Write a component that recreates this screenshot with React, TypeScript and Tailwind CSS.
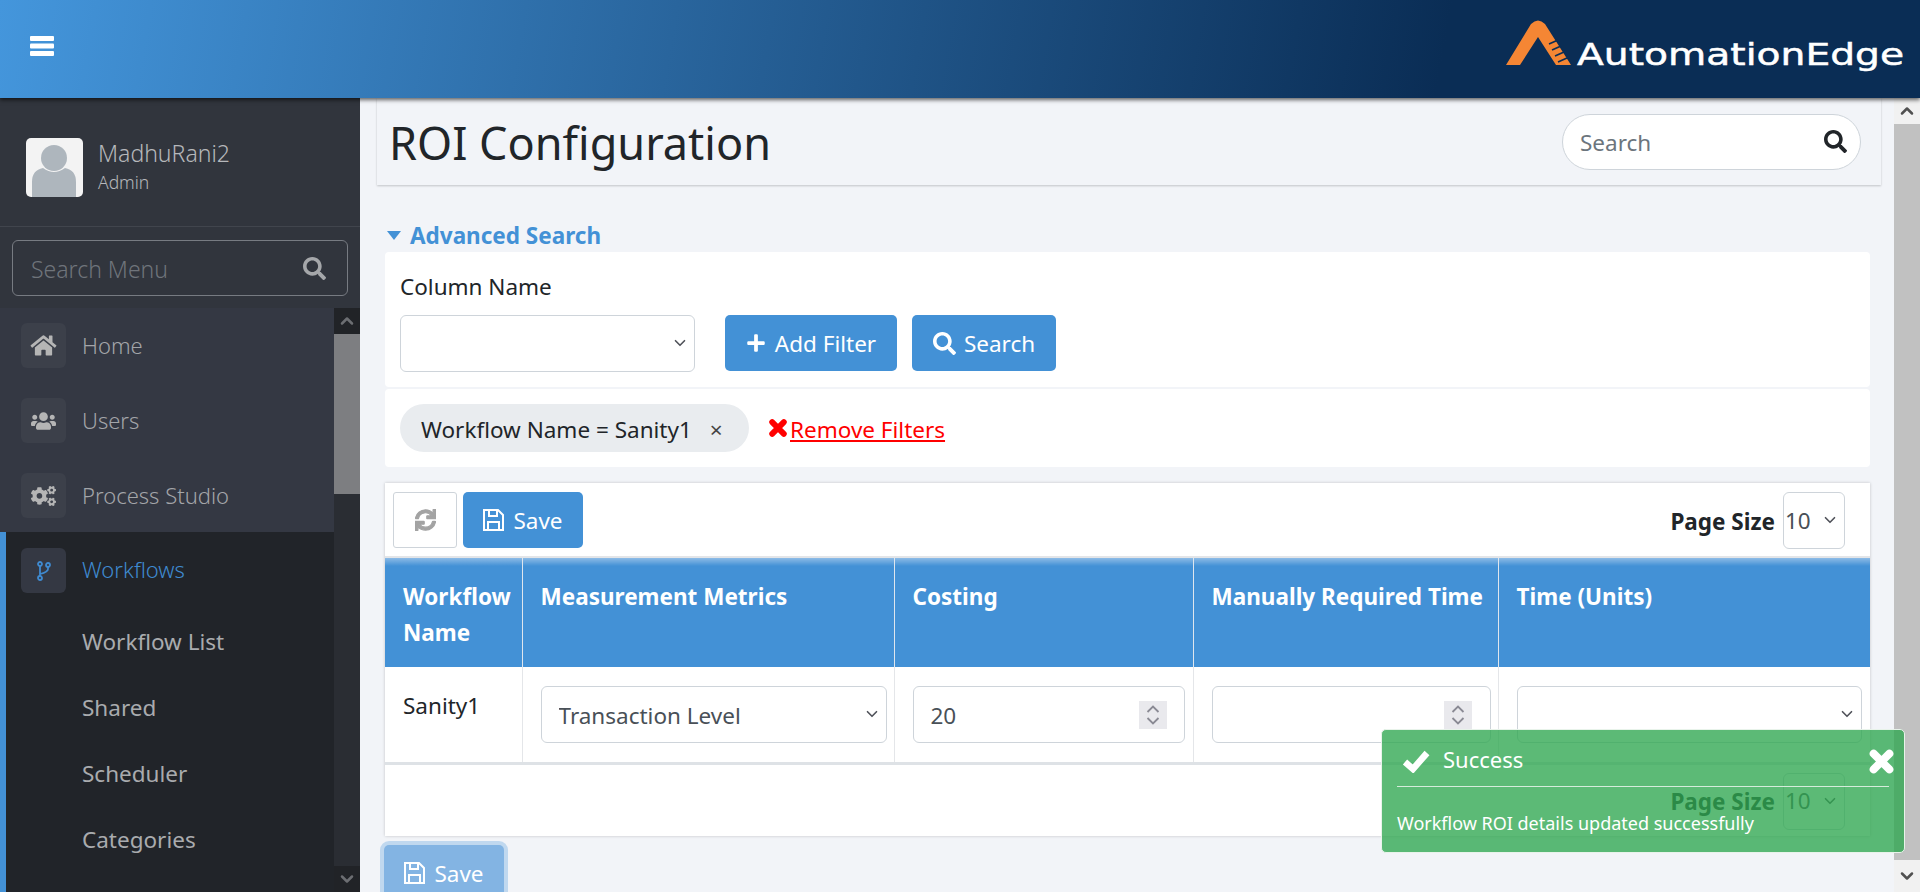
import React from "react";
import { FaHome, FaUsers, FaCogs, FaSearch, FaPlus, FaSync } from "react-icons/fa";
import { ChevronUp, ChevronDown } from "lucide-react";

const navItems = [
  { label: "Home", icon: <FaHome className="w-[27px] h-[23px]" /> },
  { label: "Users", icon: <FaUsers className="w-[25px] h-[22px]" /> },
  { label: "Process Studio", icon: <FaCogs className="w-[25px] h-[22px]" /> },
];

const subItems = ["Workflow List", "Shared", "Scheduler", "Categories"];

const Logo = () => (
  <div className="flex items-start mr-[15px] mt-[20px]">
    <svg width="65" height="45" viewBox="0 0 65 45" className="shrink-0">
      <path d="M0 45 L25 4 Q32 -3 39 4 L65 45 L50 45 L32 17 L14 45 Z" fill="#f58634" />
      <path d="M43 24 L52 20 M46 30 L55 26 M49 36 L58 32 M52 42 L61 38" stroke="#0a2d55" strokeWidth="1.6" />
    </svg>
    <span className="ml-[6px] mt-[17px] w-[328px] whitespace-nowrap origin-left scale-x-[1.265] text-[31px] leading-[34px] text-white font-['DejaVu_Sans'] [-webkit-text-stroke:0.5px_white]">AutomationEdge</span>
  </div>
);

const Avatar = () => (
  <div className="w-[57px] h-[59px] rounded-[5px] bg-[#f3f3f3] overflow-hidden shrink-0">
    <svg width="57" height="59" viewBox="0 0 57 59">
      <circle cx="28" cy="20" r="13" fill="#aeb6bd" />
      <path d="M6 59 V44 Q6 32 17 30 Q28 38 39 30 Q50 32 50 44 V59 Z" fill="#aeb6bd" />
    </svg>
  </div>
);

const SaveIcon = () => (
  <svg width="21" height="22" viewBox="0 0 21 22" fill="none" stroke="currentColor" strokeWidth="2">
    <path d="M1 1 H15 L20 6 V21 H1 Z" />
    <path d="M6 1 V7 H14 V1 M5 21 V13 H16 V21" />
  </svg>
);

const CrossIcon = ({ className }: { className: string }) => (
  <svg viewBox="0 0 24 24" className={className} fill="none" stroke="currentColor" strokeWidth="7" strokeLinecap="round">
    <path d="M5 5 L19 19 M19 5 L5 19" />
  </svg>
);

const ForkIcon = () => (
  <svg width="14" height="20" viewBox="0 0 14 20" fill="none" stroke="currentColor" strokeWidth="1.8">
    <circle cx="3" cy="3" r="2" />
    <circle cx="3" cy="17" r="2" />
    <circle cx="11" cy="4" r="2" />
    <path d="M3 5 V15 M11 6 V8 Q11 11 3 13" />
  </svg>
);

const Spinner = () => (
  <svg width="28" height="28" viewBox="0 0 28 28" fill="none" stroke="#8a8a94" strokeWidth="1.8" className="bg-[#e9e9ed] shrink-0">
    <path d="M8.5 11 L14 5.5 L19.5 11 M8.5 17 L14 22.5 L19.5 17" />
  </svg>
);

const Select = ({ value, className, selectClass }: { value?: string; className: string; selectClass?: string }) => (
  <div className={`relative h-[57px] ${className}`}>
    <select defaultValue={value} className={`appearance-none w-full h-full border border-[#ced4da] rounded-[6px] bg-white text-[#495057] ${selectClass ?? ""}`}>
      {value && <option>{value}</option>}
    </select>
    <ChevronDown className="absolute right-[6px] top-[19px] w-[18px] h-[18px] text-[#50525a] pointer-events-none" strokeWidth={2.2} />
  </div>
);

const PageSize = () => (
  <div className="flex items-center">
    <span className="font-bold text-[#212529] mr-[8px] pt-[2px]">Page Size</span>
    <Select value="10" className="w-[62px]" selectClass="pl-[1px]" />
  </div>
);

const App = () => {
  return (
    <div className="w-[1920px] h-[892px] overflow-hidden flex flex-col relative bg-[#f2f4f8] text-[22.5px] text-[#212529] font-['Noto_Sans',sans-serif]">
      {/* top bar */}
      <header className="h-[98px] shrink-0 flex justify-between relative z-10 shadow-[0_2px_4px_rgba(0,0,0,0.6)] bg-[linear-gradient(100deg,#4496dc_0%,#0a2d55_75%)]">
        <svg width="24" height="20" viewBox="0 0 24 20" fill="white" className="ml-[30px] mt-[36px]">
          <rect width="24" height="5" rx="1" />
          <rect y="7.5" width="24" height="5" rx="1" />
          <rect y="15" width="24" height="5" rx="1" />
        </svg>
        <Logo />
      </header>

      <div className="flex flex-1 min-h-0">
        {/* sidebar */}
        <aside className="w-[360px] shrink-0 bg-[#31353d] flex flex-col">
          <div className="h-[129px] shrink-0 flex items-start pl-[26px] pt-[40px] border-b border-[#41454d]">
            <Avatar />
            <div className="ml-[15px] -mt-[1px] text-[#b6b8bb]">
              <div className="text-[23px] leading-[32px] font-light">MadhuRani2</div>
              <div className="text-[17.5px] leading-[26px] font-light">Admin</div>
            </div>
          </div>
          <div className="mx-[12px] mt-[13px] h-[56px] shrink-0 border border-[#777b82] rounded-[6px] flex items-center pl-[18px] pr-[21px]">
            <input placeholder="Search Menu" className="flex-1 min-w-0 bg-transparent outline-none font-light text-[23px] pt-[3px] placeholder:text-[#6f747b]" />
            <FaSearch className="w-[23px] h-[23px] text-[#a5a7aa]" />
          </div>
          <div className="flex flex-1 min-h-0 mt-[12px] overflow-hidden">
            <nav className="flex-1 flex flex-col min-w-0">
              <div className="pt-[15px] bg-[#343843] flex flex-col h-[224px] shrink-0">
                {navItems.map((item) => (
                  <a key={item.label} className="h-[75px] shrink-0 flex items-start pl-[21px]">
                    <span className="w-[45px] h-[45px] rounded-[6px] bg-[#3c404a] flex items-center justify-center text-[#b5b5b5]">{item.icon}</span>
                    <span className="ml-[16px] mt-[7px] text-[22px] text-[#a3a5a9] font-light leading-[30px]">{item.label}</span>
                  </a>
                ))}
              </div>
              <div className="flex-1 bg-[#212429] border-l-[6px] border-[#4391d6] pt-[16px]">
                <a className="h-[45px] flex items-start pl-[15px]">
                  <span className="w-[45px] h-[45px] rounded-[6px] bg-[#343843] flex items-center justify-center text-[#3f8ad0]">
                    <ForkIcon />
                  </span>
                  <span className="ml-[16px] mt-[6px] text-[22px] text-[#3f8ad0] font-light leading-[30px]">Workflows</span>
                </a>
                <ul className="mt-[16px] pl-[76px]">
                  {subItems.map((s) => (
                    <li key={s} className="h-[66px] flex items-center text-[#a9abae]">{s}</li>
                  ))}
                </ul>
              </div>
            </nav>
            <div className="w-[26px] shrink-0 bg-[#2a2d33] flex flex-col">
              <div className="h-[26px] bg-[#212327] flex items-center justify-center text-[#6c6e72]"><ChevronUp className="w-[20px] h-[20px]" strokeWidth={3} /></div>
              <div className="h-[160px] bg-[#7d7e81]" />
              <div className="flex-1" />
              <div className="h-[26px] bg-[#212327] flex items-center justify-center text-[#6c6e72]"><ChevronDown className="w-[20px] h-[20px]" strokeWidth={3} /></div>
            </div>
          </div>
        </aside>

        {/* main */}
        <main className="flex-1 min-w-0 flex flex-col pl-[25px] pr-[24px] overflow-hidden">
          <div className="-ml-[8px] -mr-[11px] h-[87px] shrink-0 flex items-center justify-between pl-[12px] pr-[20px] shadow-[0_1px_2px_rgba(0,0,0,0.2)]">
            <h1 className="text-[45px] leading-[60px] mt-[3px]">ROI Configuration</h1>
            <div className="w-[299px] h-[56px] rounded-full border border-[#ced4da] bg-white flex items-center pl-[17px] pr-[13px]">
              <input placeholder="Search" className="flex-1 min-w-0 outline-none pt-[2px] placeholder:text-[#6c757d]" />
              <FaSearch className="w-[23px] h-[23px] text-[#212529]" />
            </div>
          </div>

          <div className="mt-[34px] h-[33px] shrink-0 flex items-center pl-[2px] text-[#4391d6] font-bold">
            <svg width="14" height="9" viewBox="0 0 14 9" className="mr-[9px]"><path d="M0 0 H14 L7 9 Z" fill="currentColor" /></svg>
            <span>Advanced Search</span>
          </div>

          <section className="h-[135px] shrink-0 bg-white rounded-[4px] pl-[15px] pt-[20px]">
            <div className="leading-[30px]">Column Name</div>
            <div className="flex mt-[13px] items-start">
              <Select className="w-[295px]" />
              <button className="ml-[30px] w-[172px] h-[56px] rounded-[5px] bg-[#4391d6] text-white flex items-center justify-center gap-[9px]">
                <FaPlus className="w-[20px] h-[20px]" /><span className="pt-[2px]">Add Filter</span>
              </button>
              <button className="ml-[15px] w-[144px] h-[56px] rounded-[5px] bg-[#4391d6] text-white flex items-center justify-center gap-[8px]">
                <FaSearch className="w-[23px] h-[23px]" /><span className="pt-[2px]">Search</span>
              </button>
            </div>
          </section>

          <section className="h-[78px] mt-[2px] shrink-0 bg-white rounded-[4px] pl-[15px] flex items-center">
            <div className="w-[349px] h-[48px] rounded-full bg-[#e9ecef] flex items-center pl-[21px]">
              <span className="pt-[3px]">Workflow Name = Sanity1</span>
              <span className="ml-[18px] pt-[3px] text-[#444]">×</span>
            </div>
            <CrossIcon className="ml-[19px] w-[20px] h-[20px] text-[#ff0000]" />
            <a className="ml-[2px] pt-[3px] text-[#ff0000] underline">Remove Filters</a>
          </section>

          <section className="mt-[16px] h-[353px] shrink-0 bg-white flex flex-col shadow-[0_0_3px_rgba(0,0,0,0.2)]">
            <div className="h-[75px] shrink-0 flex items-start justify-between pl-[8px] pr-[25px] pt-[9px] border-b-2 border-[#e3e5e8]">
              <div className="flex gap-[6px]">
                <button className="w-[64px] h-[56px] border border-[#ced4da] rounded-[3px] flex items-center justify-center text-[#a3a3a3]">
                  <FaSync className="w-[21px] h-[22px] stroke-[30]" />
                </button>
                <button className="w-[120px] h-[56px] rounded-[5px] bg-[#4391d6] text-white flex items-center justify-center gap-[9px]">
                  <SaveIcon /><span className="pt-[2px]">Save</span>
                </button>
              </div>
              <PageSize />
            </div>

            <table className="w-full table-fixed border-collapse">
              <colgroup>
                <col className="w-[137px]" />
                <col className="w-[372px]" />
                <col className="w-[299px]" />
                <col className="w-[305px]" />
                <col className="w-[372px]" />
              </colgroup>
              <thead>
                <tr className="h-[109px] text-white font-bold leading-[36px] text-left align-top">
                  {["Workflow Name", "Measurement Metrics", "Costing", "Manually Required Time", "Time (Units)"].map((h) => (
                    <th key={h} className="pl-[18px] pr-0 pt-[21px] font-bold whitespace-normal bg-[linear-gradient(#8dbbe6,#4391d6_8px)] border-x border-[#dfe6ee] first:border-l-0 last:border-r-0">{h}</th>
                  ))}
                </tr>
              </thead>
              <tbody>
                <tr className="h-[96px] align-top border-b-[3px] border-[#dee2e6]">
                  <td className="pl-[18px] pt-[24px] leading-[30px] border-r border-[#e4e6e9]">Sanity1</td>
                  <td className="pl-[18px] pr-[7px] pt-[19px] border-r border-[#e4e6e9]">
                    <Select value="Transaction Level" className="w-full" selectClass="pl-[17px] pt-[2px]" />
                  </td>
                  <td className="pl-[18px] pr-[8px] pt-[19px] border-r border-[#e4e6e9]">
                    <div className="h-[57px] border border-[#ced4da] rounded-[6px] flex items-center pl-[17px] pr-[17px]">
                      <input defaultValue="20" className="flex-1 min-w-0 outline-none pt-[2px] text-[#495057]" />
                      <Spinner />
                    </div>
                  </td>
                  <td className="pl-[18px] pr-[7px] pt-[19px] border-r border-[#e4e6e9]">
                    <div className="h-[57px] border border-[#ced4da] rounded-[6px] flex items-center justify-end pr-[18px]">
                      <Spinner />
                    </div>
                  </td>
                  <td className="pl-[18px] pr-[8px] pt-[19px]">
                    <Select className="w-full" />
                  </td>
                </tr>
              </tbody>
            </table>
            <div className="flex-1 flex justify-end items-start pt-[8px] pr-[25px]">
              <PageSize />
            </div>
          </section>

          <button className="mt-[9px] -ml-px w-[120px] h-[56px] shrink-0 rounded-[5px] bg-[#83b4e3] text-white flex items-center justify-center gap-[9px] ring-4 ring-[#c0d8ef]">
            <SaveIcon /><span className="pt-[2px]">Save</span>
          </button>
        </main>

        {/* page scrollbar */}
        <div className="w-[26px] shrink-0 bg-[#f1f1f1] flex flex-col">
          <div className="h-[26px] flex items-center justify-center text-[#505050]"><ChevronUp className="w-[20px] h-[20px]" strokeWidth={3} /></div>
          <div className="flex-1 bg-[#c1c1c1]" />
          <div className="h-[32px] flex items-center justify-center text-[#505050]"><ChevronDown className="w-[20px] h-[20px]" strokeWidth={3} /></div>
        </div>
      </div>

      {/* toast */}
      <div className="absolute z-20 left-[1381px] top-[729px] w-[524px] h-[124px] rounded-[5px] border border-[#e8f3ea] bg-[#2ea74f]/[0.78] text-white px-[15px]">
        <div className="h-[57px] flex items-center border-b border-[#d5ecdb] relative">
          <svg width="28" height="24" viewBox="0 0 28 24" fill="none" stroke="currentColor" strokeWidth="6.5" className="ml-[5px] mt-[5px]"><path d="M3 13 L11 20 L25 4" /></svg>
          <span className="ml-[13px] mt-[3px] text-[22px]">Success</span>
          <CrossIcon className="absolute right-[-6px] top-[18px] w-[27px] h-[27px]" />
        </div>
        <div className="mt-[24px] text-[18px] leading-[24px]">Workflow ROI details updated successfully</div>
      </div>
    </div>
  );
};

export default App;
